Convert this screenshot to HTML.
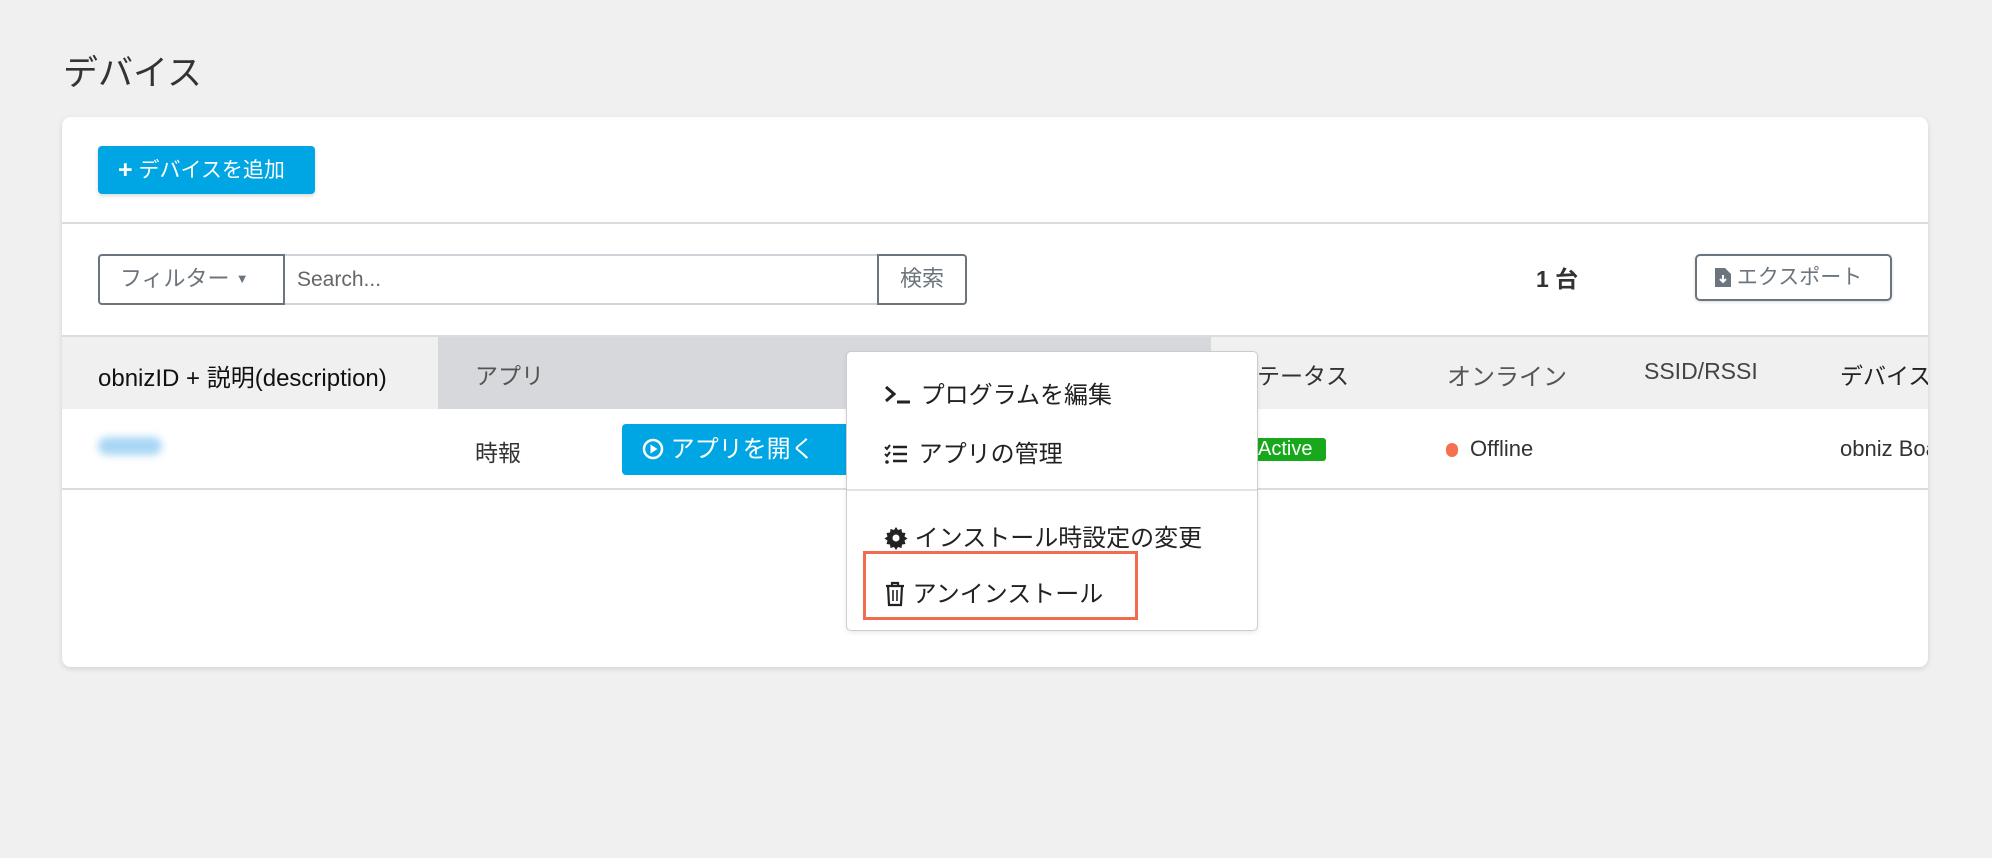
<!DOCTYPE html>
<html><head><meta charset="utf-8"><style>
*{box-sizing:border-box;margin:0;padding:0}
body{width:1992px;height:858px;background:#f0f0f0;font-family:"Liberation Sans","Noto Sans CJK JP",sans-serif;color:#222;position:relative;overflow:hidden}
.abs{position:absolute}
.t{white-space:nowrap}
</style></head><body>
<div class="abs t" style="left:63px;top:45px;font-size:35px;color:#333">デバイス</div>
<div class="abs" style="left:62px;top:117px;width:1866px;height:550px;background:#fff;border-radius:9px;box-shadow:0 2px 6px rgba(0,0,0,.12);overflow:hidden">
  <div class="abs t" style="left:36px;top:29px;width:217px;height:48px;background:#00a6e3;border-radius:4px;color:#fff;font-size:21px;line-height:48px;padding-left:20px;box-shadow:0 2px 4px rgba(0,0,0,.15)"><b style="font-size:25px;vertical-align:-1px">+</b> デバイスを追加</div>
  <div class="abs" style="left:0;top:105px;width:100%;height:2px;background:#dcdcdc"></div>
  <div class="abs t" style="left:36px;top:137px;width:187px;height:51px;border:2px solid #6c757d;border-radius:4px 0 0 4px;color:#6c757d;font-size:22px;line-height:46px;padding-left:20px">フィルター <span style="font-size:13px;vertical-align:3px">▼</span></div>
  <div class="abs t" style="left:223px;top:137px;width:593px;height:51px;border:2px solid #ced4da;border-left:none;border-right:none;color:#666;font-size:21px;line-height:47px;padding-left:12px">Search...</div>
  <div class="abs t" style="left:815px;top:137px;width:90px;height:51px;border:2px solid #6c757d;border-radius:0 4px 4px 0;color:#6c757d;font-size:22px;line-height:46px;text-align:center">検索</div>
  <div class="abs t" style="left:1474px;top:143px;font-size:23px;font-weight:bold;color:#333">1 台</div>
  <div class="abs t" style="left:1633px;top:137px;width:197px;height:47px;border:2px solid #6c757d;border-radius:5px;color:#6c757d;font-size:21px;line-height:43px;padding-left:18px;box-shadow:0 1px 3px rgba(0,0,0,.15)"><svg width="16" height="20" viewBox="0 0 16 20" style="vertical-align:-3px"><path d="M0 1h10l6 6v13H0z" fill="#6c757d"/><path d="M8 8v7M5 12l3 3 3-3" stroke="#fff" stroke-width="2" fill="none"/></svg> エクスポート</div>
  <div class="abs" style="left:0;top:218px;width:100%;height:2px;background:#dcdcdc"></div>
  <div class="abs" style="left:0;top:220px;width:100%;height:72px;background:#f0f0f0"></div>
  <div class="abs" style="left:376px;top:220px;width:773px;height:72px;background:#d6d8db"></div>
  <div class="abs t" style="left:36px;top:241px;font-size:24px;color:#111">obnizID + 説明(description)</div>
  <div class="abs t" style="left:413px;top:240px;font-size:23px;color:#555">アプリ</div>
  <div class="abs t" style="left:1172px;top:240px;font-size:23px;color:#333">ステータス</div>
  <div class="abs t" style="left:1385px;top:240px;font-size:24px;color:#555">オンライン</div>
  <div class="abs t" style="left:1582px;top:241px;font-size:23px;color:#444">SSID/RSSI</div>
  <div class="abs t" style="left:1778px;top:240px;font-size:23px;color:#222">デバイス</div>
  <div class="abs" style="left:36px;top:320px;width:64px;height:18px;background:#a9d6f5;border-radius:9px;filter:blur(4px)"></div>
  <div class="abs t" style="left:413px;top:317px;font-size:23px;color:#333">時報</div>
  <div class="abs t" style="left:560px;top:307px;width:230px;height:51px;background:#00a6e3;border-radius:4px;color:#fff;font-size:24px;line-height:51px;padding-left:20px;border-right:3px solid #7fb0ff"><svg width="22" height="22" viewBox="0 0 22 22" style="vertical-align:-3px"><circle cx="11" cy="11" r="9" stroke="#fff" stroke-width="2.5" fill="none"/><path d="M8.5 6.5v9l7-4.5z" fill="#fff"/></svg> アプリを開く</div>
  <div class="abs t" style="left:1190px;top:321px;width:74px;height:23px;background:#17a81b;border-radius:3px;color:#fff;font-size:20px;line-height:23px;padding-left:6px">Active</div>
  <div class="abs" style="left:1384px;top:326px;width:12px;height:14px;background:#f4704f;border-radius:6px"></div>
  <div class="abs t" style="left:1408px;top:319px;font-size:22px;color:#333">Offline</div>
  <div class="abs t" style="left:1778px;top:319px;font-size:22px;color:#333">obniz Board</div>
  <div class="abs" style="left:0;top:371px;width:100%;height:2px;background:#dcdcdc"></div>
</div>
<div class="abs" style="left:846px;top:351px;width:412px;height:280px;background:#fff;border:1.5px solid #ccc;border-radius:5px;box-shadow:0 2px 5px rgba(0,0,0,.08)">
  <div class="abs t" style="left:37px;top:23px;font-size:24px;color:#222"><svg width="30" height="22" viewBox="0 0 30 22" style="vertical-align:-3px"><path d="M2 3l8 7-8 7" stroke="#222" stroke-width="3" fill="none"/><path d="M13 18h13" stroke="#222" stroke-width="3"/></svg> プログラムを編集</div>
  <div class="abs t" style="left:37px;top:82px;font-size:24px;color:#222"><svg width="28" height="22" viewBox="0 0 28 22" style="vertical-align:-3px"><path d="M1 4l2 2 3-4M1 11l2 2 3-4" stroke="#222" stroke-width="2" fill="none"/><circle cx="3" cy="19" r="1.8" fill="#222"/><path d="M9 4h14M9 11h14M9 18h14" stroke="#222" stroke-width="2.5"/></svg> アプリの管理</div>
  <div class="abs" style="left:0;top:137px;width:100%;height:1.5px;background:#e2e2e2"></div>
  <div class="abs t" style="left:37px;top:166px;font-size:24px;color:#222"><svg width="24" height="24" viewBox="0 0 24 24" style="vertical-align:-4px"><path d="M12 1l2 3 3.5-1 .5 3.5 3.5.5-1 3.5 3 2-3 2 1 3.5-3.5.5-.5 3.5-3.5-1-2 3-2-3-3.5 1-.5-3.5-3.5-.5 1-3.5-3-2 3-2-1-3.5 3.5-.5.5-3.5 3.5 1z" fill="#222"/><circle cx="12" cy="12" r="3.5" fill="#fff"/></svg> インストール時設定の変更</div>
  <div class="abs t" style="left:37px;top:222px;font-size:24px;color:#222"><svg width="22" height="26" viewBox="0 0 22 26" style="vertical-align:-5px"><path d="M2 5h18M8 5V2h6v3M4 5l1 19h12l1-19" stroke="#222" stroke-width="2.2" fill="none"/><path d="M9 9v11M13 9v11" stroke="#222" stroke-width="1.6"/></svg> アンインストール</div>
</div>
<div class="abs" style="left:863px;top:551px;width:275px;height:69px;border:3px solid #f26a4f"></div>
</body></html>
